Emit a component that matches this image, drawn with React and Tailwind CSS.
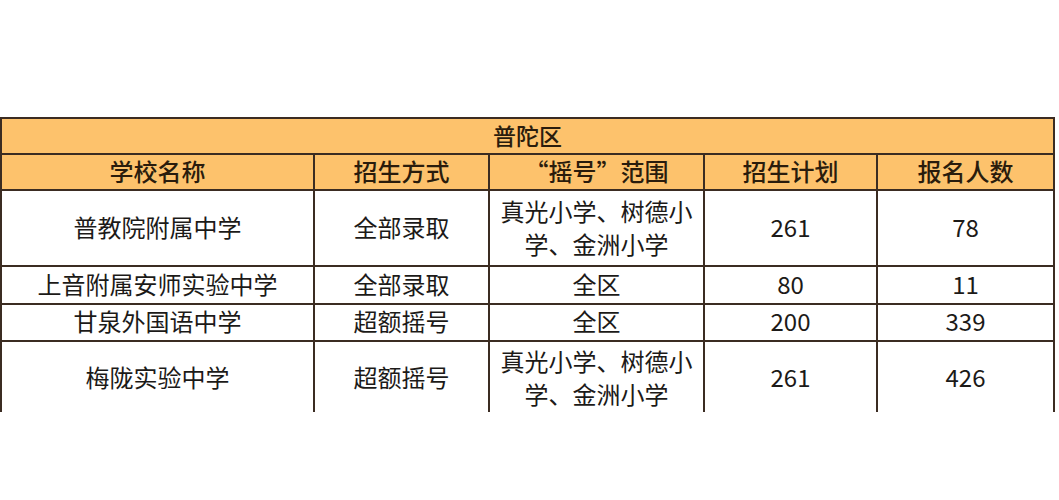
const rows = [
  { name: '普教院附属中学', mode: '全部录取', range: ['真光小学、树德小', '学、金洲小学'], plan: '261', count: '78', h: 'h-[76px]' },
  { name: '上音附属安师实验中学', mode: '全部录取', range: ['全区'], plan: '80', count: '11', h: 'h-[37px]' },
  { name: '甘泉外国语中学', mode: '超额摇号', range: ['全区'], plan: '200', count: '339', h: 'h-[37px]' },
  { name: '梅陇实验中学', mode: '超额摇号', range: ['真光小学、树德小', '学、金洲小学'], plan: '261', count: '426', h: 'h-[76px]' },
];

const cols = 'grid grid-cols-[313px_175px_215px_173px_177px]';
const cell = 'flex items-center justify-center pb-[3px] leading-[30px] border-r-2 border-b-2 border-[#3b2c22] text-center';

export default function App() {
  return (
    <div className="w-[1059px] h-[500px] bg-white pt-[117px] font-['Noto_Sans_CJK_SC','Noto_Sans',sans-serif] text-[#1c1a18]">
      <div className="w-[1055px] h-[295px] overflow-hidden border-l-2 border-t-2 border-[#3b2c22]">
        <div className="h-[36px] flex items-center justify-center pb-[3px] leading-[30px] bg-[#fdc26c] border-r-2 border-b-2 border-[#3b2c22] text-[23px] font-medium text-[#2a1c0c]">
          普陀区
        </div>
        <div className={`${cols} h-[36px] bg-[#fdc26c] text-[24px] font-medium text-[#2a1c0c]`}>
          <div className={cell}>学校名称</div>
          <div className={cell}>招生方式</div>
          <div className={cell}>“摇号”范围</div>
          <div className={cell}>招生计划</div>
          <div className={cell}>报名人数</div>
        </div>
        {rows.map((r) => (
          <div key={r.name} className={`${cols} ${r.h} text-[24px]`}>
            <div className={cell}>{r.name}</div>
            <div className={cell}>{r.mode}</div>
            <div className={`${cell} flex-col !leading-[33px]`}>
              {r.range.map((t) => (
                <span key={t}>{t}</span>
              ))}
            </div>
            <div className={cell}>{r.plan}</div>
            <div className={cell}>{r.count}</div>
          </div>
        ))}
      </div>
    </div>
  );
}
